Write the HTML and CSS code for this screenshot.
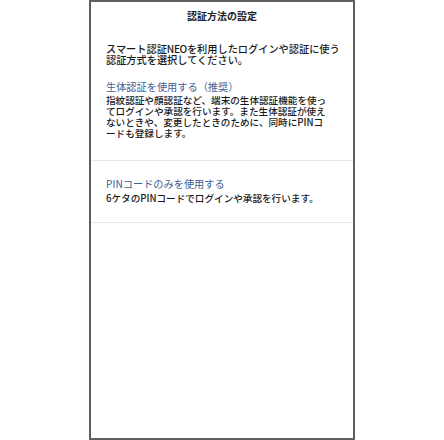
FILE: index.html
```html
<!DOCTYPE html>
<html lang="ja">
<head>
<meta charset="utf-8">
<link rel="stylesheet" href="styles.css">
</head>
<body>
<div class="frame">
  <div class="title">認証方法の設定</div>
  <p class="intro">スマート認証<span class="latin">NEO</span>を利用したログインや認証に使う<br>認証方式を選択してください。</p>
  <div class="option first">
    <div class="opt-title">生体認証を使用する（推奨）</div>
    <p class="opt-desc">指紋認証や顔認証など、端末の生体認証機能を使っ<br>てログインや承認を行います。また生体認証が使え<br>ないときや、変更したときのために、同時にPINコ<br>ードも登録します。</p>
  </div>
  <div class="option second">
    <div class="opt-title">PINコードのみを使用する</div>
    <p class="opt-desc">6ケタのPINコードでログインや承認を行います。</p>
  </div>
</div>
</body>
</html>
```
FILE: styles.css
```css
html, body {
  margin: 0;
  padding: 0;
  background: #ffffff;
}
body {
  width: 444px;
  height: 440px;
  display: flex;
  justify-content: center;
  font-family: "Noto Sans CJK JP", "Noto Sans", sans-serif;
  color: #1a1a1a;
}
.frame {
  box-sizing: border-box;
  width: 266px;
  height: 440px;
  border: 2px solid #5f5f5f;
  display: flex;
  flex-direction: column;
}
.title {
  padding-top: 8px;
  height: 12px;
  line-height: 12px;
  font-size: 10px;
  font-weight: 700;
  text-align: center;
  color: #222;
}
.intro {
  margin: 21px 0 0;
  padding-left: 15px;
  font-size: 10.2px;
  line-height: 11px;
  font-weight: 500;
  white-space: nowrap;
}
.latin {
  letter-spacing: -0.4px;
}
.option {
  padding-left: 15px;
  border-bottom: 1px solid #e6e6e6;
}
.option.first {
  padding-top: 16px;
  padding-bottom: 21px;
}
.option.second {
  padding-top: 17px;
  padding-bottom: 18px;
}
.opt-title {
  font-size: 10.2px;
  line-height: 12px;
  color: #3f6094;
}
.opt-desc {
  margin: 2px 0 0;
  font-size: 9.6px;
  line-height: 11px;
  font-weight: 500;
  white-space: nowrap;
}
.second .opt-desc {
  margin-top: 3px;
}
```
